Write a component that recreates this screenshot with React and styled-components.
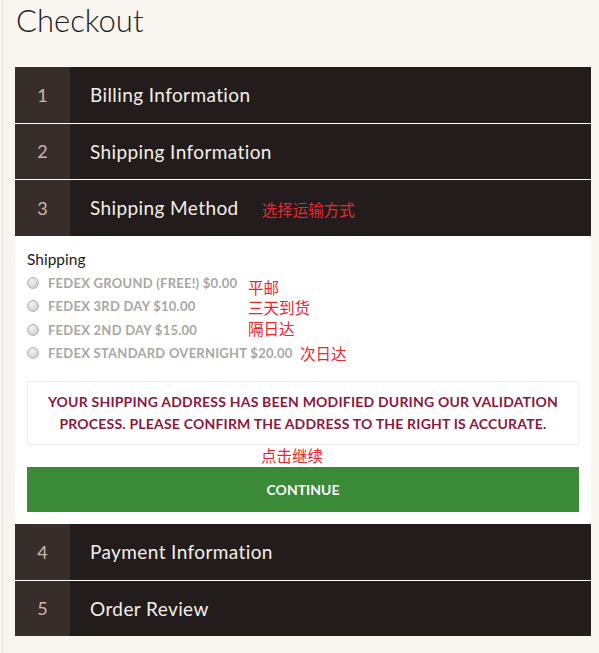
import React from "react";
import styled, { createGlobalStyle } from "styled-components";

const GlobalStyle = createGlobalStyle`
  html, body {
    margin: 0;
    padding: 0;
    background: #f9f6f2;
  }
  body {
    font-family: Lato, "Noto Sans", "Noto Sans CJK SC", sans-serif;
  }
`;

const Page = styled.div`
  margin-left: 2px;
  border-left: 1px solid #e4e0dc;
  padding: 0 8px 18px 12px;
  min-height: 653px;
  box-sizing: border-box;
`;

const Title = styled.h1`
  margin: 0 0 27px 0;
  font-family: Lato, sans-serif;
  font-weight: 300;
  font-size: 31px;
  line-height: 40px;
  color: #231c1c;
  padding-left: 1px;
`;

const Steps = styled.div`
  display: flex;
  flex-direction: column;
  gap: 1px;
  background: #fff;
`;

const Header = styled.div`
  display: flex;
  align-items: center;
  height: 55.5px;
  background: #231c1c;
`;

const Num = styled.div`
  width: 55px;
  height: 100%;
  display: flex;
  align-items: center;
  justify-content: center;
  background: #372e2b;
  color: #c8baa8;
  font-size: 18px;
`;

const StepTitle = styled.div`
  padding-left: 20px;
  color: #f3efe7;
  font-size: 19px;
  letter-spacing: 0.4px;
`;

const Remark = styled.span`
  font-family: "Noto Sans CJK SC", sans-serif;
  font-size: 15.5px;
  color: #e8262c;
  line-height: 1;
`;

const HeaderRemark = styled(Remark)`
  margin-left: 23px;
  margin-top: 3px;
`;

const Body = styled.div`
  background: #fff;
  padding: 14px 12px 11px 12px;
`;

const Label = styled.div`
  font-size: 15.5px;
  line-height: 18px;
  color: #1f1a1a;
  margin-bottom: 3.5px;
`;

const Options = styled.div`
  position: relative;
`;

const Option = styled.label`
  display: flex;
  align-items: center;
  height: 23.5px;
  font-size: 13px;
  font-weight: 700;
  letter-spacing: 0.25px;
  color: #a9a7a4;
`;

const Radio = styled.span`
  width: 10px;
  height: 10px;
  border-radius: 50%;
  border: 1px solid #b7b7b7;
  background: radial-gradient(circle at 40% 35%, #f2f2f2 0%, #d6d6d6 60%, #c4c4c4 100%);
  margin: 0 9px 0 0;
  flex: none;
`;

const OptionRemark = styled(Remark)`
  position: absolute;
  left: ${p => p.$left}px;
  top: ${p => p.$top}px;
`;

const Message = styled.div`
  margin-top: 16px;
  border: 1px solid #efeceb;
  padding: 9px 10px;
  text-align: center;
  color: #8b1840;
  font-size: 14px;
  font-weight: 700;
  letter-spacing: 0.2px;
  line-height: 22px;
`;

const ContinueRemark = styled.div`
  height: 22px;
  padding-left: 234px;
  display: flex;
  align-items: center;
`;

const Button = styled.button`
  display: block;
  width: 100%;
  height: 45px;
  border: none;
  background: #3a8a37;
  color: #fff;
  font-family: Lato, sans-serif;
  font-weight: 700;
  font-size: 14px;
  cursor: pointer;
`;

const steps = [
  { n: 1, title: "Billing Information" },
  { n: 2, title: "Shipping Information" },
  { n: 3, title: "Shipping Method", remark: "选择运输方式", open: true },
  { n: 4, title: "Payment Information" },
  { n: 5, title: "Order Review" }
];

const options = [
  { label: "FEDEX GROUND (FREE!) $0.00", remark: "平邮", left: 221, top: 9 },
  { label: "FEDEX 3RD DAY $10.00", remark: "三天到货", left: 221, top: 29 },
  { label: "FEDEX 2ND DAY $15.00", remark: "隔日达", left: 221, top: 50 },
  { label: "FEDEX STANDARD OVERNIGHT $20.00", remark: "次日达", left: 273, top: 75 }
];

const ShippingMethod = () => (
  <Body>
    <Label>Shipping</Label>
    <Options>
      {options.map(o => (
        <Option key={o.label}>
          <Radio />
          {o.label}
        </Option>
      ))}
      {options.map(o => (
        <OptionRemark key={o.remark} $left={o.left} $top={o.top}>
          {o.remark}
        </OptionRemark>
      ))}
    </Options>
    <Message>
      YOUR SHIPPING ADDRESS HAS BEEN MODIFIED DURING OUR VALIDATION
      <br />
      PROCESS. PLEASE CONFIRM THE ADDRESS TO THE RIGHT IS ACCURATE.
    </Message>
    <ContinueRemark>
      <Remark>点击继续</Remark>
    </ContinueRemark>
    <Button>CONTINUE</Button>
  </Body>
);

export default function App() {
  return (
    <>
      <GlobalStyle />
      <Page>
        <Title>Checkout</Title>
        <Steps>
          {steps.map(step => (
            <div key={step.n}>
              <Header>
                <Num>{step.n}</Num>
                <StepTitle>{step.title}</StepTitle>
                {step.remark && <HeaderRemark>{step.remark}</HeaderRemark>}
              </Header>
              {step.open && <ShippingMethod />}
            </div>
          ))}
        </Steps>
      </Page>
    </>
  );
}
